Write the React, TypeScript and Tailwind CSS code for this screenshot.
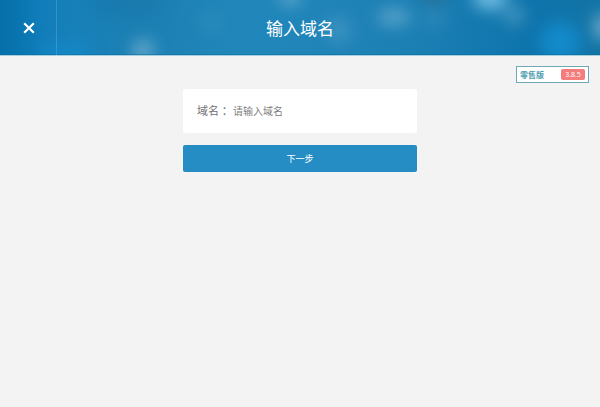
import { useState } from "react";
import type { FormEvent } from "react";

const EDITION = { name: "零售版", version: "3.8.5" };

function HeaderBackdrop() {
  return (
    <svg
      className="absolute inset-0 h-full w-full"
      viewBox="0 0 600 56"
      preserveAspectRatio="none"
      aria-hidden="true"
    >
      <defs>
        <linearGradient id="base" x1="0" x2="1" y1="0" y2="0">
          <stop offset="0" stopColor="#0570aa" />
          <stop offset="0.03" stopColor="#0975b0" />
          <stop offset="0.07" stopColor="#117dba" />
          <stop offset="0.13" stopColor="#1880b8" />
          <stop offset="0.24" stopColor="#1c7fb3" />
          <stop offset="0.4" stopColor="#2187bb" />
          <stop offset="0.58" stopColor="#2083b8" />
          <stop offset="0.72" stopColor="#1a7eb3" />
          <stop offset="0.88" stopColor="#0e74ac" />
          <stop offset="1" stopColor="#1374a6" />
        </linearGradient>
        <filter
          id="soft"
          filterUnits="userSpaceOnUse"
          x="-40"
          y="-50"
          width="680"
          height="156"
          colorInterpolationFilters="sRGB"
        >
          <feGaussianBlur stdDeviation="8" />
        </filter>
      </defs>
      <rect width="600" height="56" fill="url(#base)" />
      <g filter="url(#soft)">
        <ellipse cx="66" cy="52" rx="26" ry="12" fill="#148ccd" opacity="0.6" />
        <ellipse cx="125" cy="4" rx="40" ry="14" fill="#0f6a9b" opacity="0.2" />
        <ellipse cx="143" cy="51" rx="11" ry="12" fill="#8fc3dc" opacity="0.6" />
        <ellipse cx="210" cy="22" rx="12" ry="9" fill="#8fc3dc" opacity="0.12" />
        <ellipse cx="290" cy="-3" rx="11" ry="8" fill="#8fc3dc" opacity="0.6" />
        <ellipse cx="338" cy="30" rx="13" ry="12" fill="#8fc3dc" opacity="0.25" />
        <ellipse cx="394" cy="17" rx="17" ry="9" fill="#8fc3dc" opacity="0.5" />
        <ellipse cx="434" cy="-5" rx="12" ry="7" fill="#3f5f70" opacity="0.6" />
        <ellipse cx="435" cy="18" rx="12" ry="9" fill="#8fc3dc" opacity="0.16" />
        <ellipse cx="490" cy="-3" rx="17" ry="13" fill="#7fc8ea" opacity="0.85" />
        <ellipse cx="514" cy="15" rx="11" ry="10" fill="#8fc3dc" opacity="0.4" />
        <ellipse cx="560" cy="42" rx="20" ry="20" fill="#1492d6" opacity="0.75" />
        <ellipse cx="603" cy="27" rx="9" ry="13" fill="#a0cce0" opacity="0.7" />
      </g>
      <rect y="54" width="600" height="1" fill="#0f6c9c" opacity="0.5" />
      <rect y="55" width="600" height="1" fill="#a5cfdf" />
    </svg>
  );
}

function PageHeader({ title }: { title: string }) {
  return (
    <header className="relative flex h-14 items-stretch overflow-hidden text-white">
      <HeaderBackdrop />
      <button
        type="button"
        aria-label="关闭"
        className="relative flex w-[57px] items-center justify-center border-r border-white/15"
      >
        <svg viewBox="0 0 12 12" className="ml-px h-3 w-3" fill="none" stroke="currentColor" strokeWidth="2.2" aria-hidden="true">
          <path d="M1.2 1.2 10.8 10.8M10.8 1.2 1.2 10.8" />
        </svg>
      </button>
      <h1 className="relative flex flex-1 items-center justify-center pt-0.5 pr-[57px] text-[17px] leading-6">
        {title}
      </h1>
    </header>
  );
}

function EditionBadge() {
  return (
    <div className="flex h-[17px] w-[73px] items-center justify-between border border-[#6fa9b5] bg-white px-[3px]">
      <span className="text-[8px] leading-3 font-bold text-[#4f9dae]">{EDITION.name}</span>
      <span className="w-6 rounded-[2px] bg-[#f47c7c] text-center text-[7px] leading-[11px] text-white">
        {EDITION.version}
      </span>
    </div>
  );
}

export default function App() {
  const [domain, setDomain] = useState("");

  const handleSubmit = (event: FormEvent) => {
    event.preventDefault();
  };

  return (
    <div className="min-h-screen bg-[#f3f3f3] font-['Open_Sans','Noto_Sans_CJK_SC',sans-serif]">
      <PageHeader title="输入域名" />
      <div className="flex justify-end px-[11px] pt-[10px]">
        <EditionBadge />
      </div>
      <main className="flex justify-center px-4 pt-[6px]">
        <form onSubmit={handleSubmit} className="flex w-full max-w-[234px] flex-col gap-3">
          <div className="flex h-11 items-center rounded-[2px] bg-white px-[14px]">
            <label htmlFor="domain" className="w-9 shrink-0 text-[11px] leading-4 whitespace-nowrap text-[#707070]">
              域名 ：
            </label>
            <input
              id="domain"
              type="text"
              value={domain}
              onChange={(event) => setDomain(event.target.value)}
              placeholder="请输入域名"
              className="min-w-0 flex-1 bg-transparent text-[10px] leading-4 text-[#555] outline-none placeholder:text-[#808080]"
            />
          </div>
          <button type="submit" className="h-[27px] rounded-[2px] bg-[#258dc3] text-[9px] leading-4 text-white">
            下一步
          </button>
        </form>
      </main>
    </div>
  );
}
